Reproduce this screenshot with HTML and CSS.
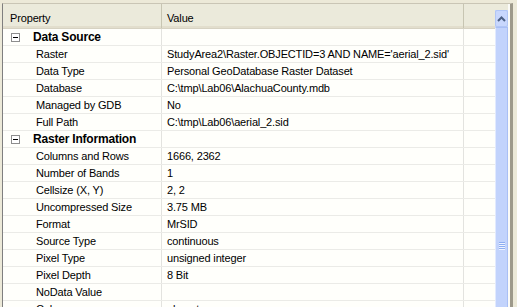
FILE: index.html
```html
<!DOCTYPE html>
<html lang="en">
<head>
  <meta charset="UTF-8" />
  <title>Layer Properties</title>
  <link rel="stylesheet" href="styles.css">
</head>
<body>
  <div class="frame">
    <div class="grid-box">
      <div class="grid-view">
        <!-- header -->
        <div class="head">
          <div class="hcell col-prop">Property</div>
          <div class="hcell col-val">Value</div>
          <div class="hcell col-pad"></div>
        </div>

        <!-- Data Source -->
        <div class="row cat">
          <div class="cell col-prop"><span class="toggle"></span>Data Source</div>
          <div class="cell col-val"></div>
          <div class="cell col-pad"></div>
        </div>
        <div class="row">
          <div class="cell col-prop">Raster</div>
          <div class="cell col-val">StudyArea2\Raster.OBJECTID=3 AND NAME='aerial_2.sid'</div>
          <div class="cell col-pad"></div>
        </div>
        <div class="row">
          <div class="cell col-prop">Data Type</div>
          <div class="cell col-val">Personal GeoDatabase Raster Dataset</div>
          <div class="cell col-pad"></div>
        </div>
        <div class="row">
          <div class="cell col-prop">Database</div>
          <div class="cell col-val">C:\tmp\Lab06\AlachuaCounty.mdb</div>
          <div class="cell col-pad"></div>
        </div>
        <div class="row">
          <div class="cell col-prop">Managed by GDB</div>
          <div class="cell col-val">No</div>
          <div class="cell col-pad"></div>
        </div>
        <div class="row">
          <div class="cell col-prop">Full Path</div>
          <div class="cell col-val">C:\tmp\Lab06\aerial_2.sid</div>
          <div class="cell col-pad"></div>
        </div>

        <!-- Raster Information -->
        <div class="row cat">
          <div class="cell col-prop"><span class="toggle"></span>Raster Information</div>
          <div class="cell col-val"></div>
          <div class="cell col-pad"></div>
        </div>
        <div class="row">
          <div class="cell col-prop">Columns and Rows</div>
          <div class="cell col-val">1666, 2362</div>
          <div class="cell col-pad"></div>
        </div>
        <div class="row">
          <div class="cell col-prop">Number of Bands</div>
          <div class="cell col-val">1</div>
          <div class="cell col-pad"></div>
        </div>
        <div class="row">
          <div class="cell col-prop">Cellsize (X, Y)</div>
          <div class="cell col-val">2, 2</div>
          <div class="cell col-pad"></div>
        </div>
        <div class="row">
          <div class="cell col-prop">Uncompressed Size</div>
          <div class="cell col-val">3.75 MB</div>
          <div class="cell col-pad"></div>
        </div>
        <div class="row">
          <div class="cell col-prop">Format</div>
          <div class="cell col-val">MrSID</div>
          <div class="cell col-pad"></div>
        </div>
        <div class="row">
          <div class="cell col-prop">Source Type</div>
          <div class="cell col-val">continuous</div>
          <div class="cell col-pad"></div>
        </div>
        <div class="row">
          <div class="cell col-prop">Pixel Type</div>
          <div class="cell col-val">unsigned integer</div>
          <div class="cell col-pad"></div>
        </div>
        <div class="row">
          <div class="cell col-prop">Pixel Depth</div>
          <div class="cell col-val">8 Bit</div>
          <div class="cell col-pad"></div>
        </div>
        <div class="row">
          <div class="cell col-prop">NoData Value</div>
          <div class="cell col-val"></div>
          <div class="cell col-pad"></div>
        </div>
        <div class="row">
          <div class="cell col-prop">Colormap</div>
          <div class="cell col-val">absent</div>
          <div class="cell col-pad"></div>
        </div>
      </div>

      <!-- vertical scrollbar -->
      <div class="vscroll">
        <div class="vscroll-top"></div>
        <div class="vscroll-btn">
          <svg width="9" height="6" viewBox="0 0 9 6">
            <path d="M1 5 L4.5 1.5 L8 5" fill="none" stroke="#4d6185" stroke-width="2"/>
          </svg>
        </div>
        <div class="vscroll-thumb">
          <span class="grip"></span>
          <span class="grip"></span>
          <span class="grip"></span>
          <span class="grip"></span>
        </div>
      </div>
    </div>
  </div>
</body>
</html>
```

FILE: styles.css
```css
body {
  margin: 0;
  background-color: #ece9d8;
  font-family: 'Liberation Sans', Arial, sans-serif;
  font-size: 11px;
  letter-spacing: -0.15px;
  color: #000;
  overflow: hidden;
}

.frame {
  padding: 3px 4px 0 2px;
  height: 304px;
}

.grid-box {
  display: flex;
  height: 100%;
  border-left: 1px solid #7f7f7f;
  border-right: 3px solid #9d998a;
  border-top: 1px solid #c9c5b5;
  background-color: #fffffb;
  overflow: hidden;
}

.grid-view {
  flex: 1;
  min-width: 0;
}

/* header */
.head {
  display: flex;
  height: 24px;
  background-color: #ebeadb;
  border-bottom: 1px solid #d6d2c2;
  box-shadow: inset 0 -2px 0 #e2decd;
}

.hcell {
  display: flex;
  align-items: center;
  padding-top: 3px;
  border-right: 1px solid #c7c5b2;
  box-sizing: border-box;
}

.col-prop {
  width: 159px;
  padding-left: 7px;
  box-sizing: border-box;
}

.col-val {
  width: 302px;
  padding-left: 5px;
  box-sizing: border-box;
}

.col-pad {
  width: 30px;
  box-sizing: border-box;
}

.head .col-pad {
  border-right: none;
}

/* rows */
.row {
  display: flex;
  height: 17px;
  border-bottom: 1px solid #ebebe7;
  box-sizing: border-box;
}

.cell {
  display: flex;
  align-items: center;
  white-space: nowrap;
  border-right: 1px solid #e3e3df;
  box-sizing: border-box;
}

.row .col-prop {
  padding-left: 33px;
}

.row .col-pad {
  border-right: none;
}

.cat .col-prop {
  padding-left: 7px;
  font-weight: bold;
  font-size: 12px;
  letter-spacing: -0.2px;
}

.toggle {
  position: relative;
  width: 7px;
  height: 7px;
  margin-left: 1px;
  margin-right: 13px;
  border: 1px solid #8d8d8d;
  background-color: #fff;
}

.toggle::after {
  content: "";
  position: absolute;
  left: 1px;
  top: 3px;
  width: 5px;
  height: 1px;
  background-color: #000;
}

/* scrollbar */
.vscroll {
  display: flex;
  flex-direction: column;
  width: 13px;
  border-right: 2px solid #fbfbf8;
  background-color: #c4d4fc;
}

.vscroll-top {
  height: 6px;
  background-color: #ebeadb;
}

.vscroll-btn {
  display: flex;
  align-items: center;
  justify-content: center;
  height: 15px;
  background-color: #c8d7fd;
  border: 1px solid #b1c6f5;
  border-radius: 2px;
}

.vscroll-thumb {
  flex: 1;
  display: flex;
  flex-direction: column;
  align-items: center;
  padding-top: 214px;
  gap: 1px;
  background-color: #c2d3fc;
  border-left: 1px solid #e2eafe;
  border-right: 1px solid #a9bff5;
  border-top: 1px solid #a9bff5;
}

.grip {
  width: 6px;
  height: 1px;
  background-color: #8eaef2;
  box-shadow: 0 1px 0 #eef3ff;
}
```
